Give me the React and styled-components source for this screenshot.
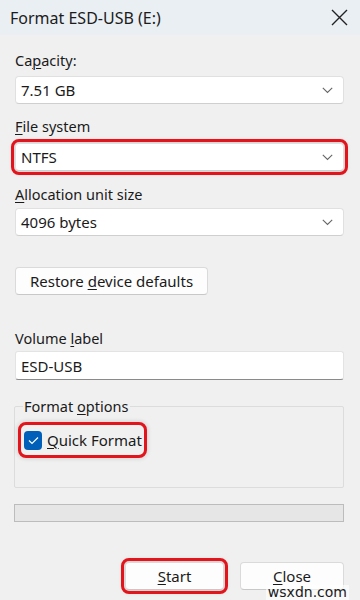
import React from "react";
import styled, { createGlobalStyle } from "styled-components";

const Global = createGlobalStyle`
  html, body { margin: 0; padding: 0; background: #f0f0f0; }
  body { font-family: "Noto Sans", "Open Sans", sans-serif; color: #1a1a1a; }
  * { box-sizing: border-box; }
`;

const Window = styled.div`
  position: relative;
  width: 360px;
  height: 600px;
  background: #f0f0f0;
  display: flex;
  flex-direction: column;
  overflow: hidden;
`;

const TitleBar = styled.div`
  height: 35px;
  background: #eaeff4;
  display: flex;
  align-items: center;
  justify-content: space-between;
  padding: 0 12px 0 10px;
  font-size: 16px;
  color: #1c1c1c;
`;

const Body = styled.div`
  display: flex;
  flex-direction: column;
  padding: 15px 16px 0 15px;
`;

const Label = styled.div`
  font-size: 14.5px;
  line-height: 20px;
  height: 20px;
  margin-top: ${(p) => p.$mt || 0}px;
  margin-bottom: ${(p) => p.$mb || 6}px;
  color: #1a1a1a;
`;

const Combo = styled.div`
  height: 28px;
  background: #fff;
  border: 1px solid #e0e0e0;
  border-bottom-color: #cfcfcf;
  border-radius: 4px;
  display: flex;
  align-items: center;
  justify-content: space-between;
  padding: 0 10px 0 5px;
  font-size: 15px;
  color: #1a1a1a;
  ${(p) =>
    p.$highlight &&
    `outline: 3px solid #e3141b; outline-offset: 1px; border-radius: 4px; box-shadow: 0 0 4px 3px rgba(0,0,0,0.12);`}
`;

const TextInput = styled.div`
  height: 29px;
  background: #fff;
  border: 1px solid #e3e3e3;
  border-bottom: 1px solid #8a8a8a;
  border-radius: 3px;
  display: flex;
  align-items: center;
  padding: 0 5px;
  font-size: 15px;
`;

const Button = styled.div`
  height: 28px;
  background: #fdfdfd;
  border: 1px solid #dadada;
  border-bottom-color: #c8c8c8;
  border-radius: 4px;
  display: flex;
  align-items: center;
  justify-content: center;
  font-size: 15px;
  color: #1a1a1a;
  width: ${(p) => p.$w}px;
  ${(p) =>
    p.$highlight &&
    `outline: 3px solid #e3141b; outline-offset: 1px; box-shadow: 0 0 4px 3px rgba(0,0,0,0.12);`}
`;

const GroupBox = styled.fieldset`
  margin: 17px 0 0 -1px;
  padding: 6px 0 0 6px;
  height: 91px;
  border: 1px solid #dcdcdc;
  border-radius: 2px;
  min-width: 0;
`;

const Legend = styled.legend`
  padding: 0 2px 0 1px;
  margin-left: 2px;
  font-size: 14.5px;
  line-height: 18px;
  color: #1a1a1a;
`;

const CheckRow = styled.div`
  display: inline-flex;
  align-items: center;
  gap: 5px;
  padding: 2px 2px 2px 3px;
  margin-top: 4px;
  border-radius: 5px;
  outline: 3px solid #e3141b;
  outline-offset: 0;
  box-shadow: 0 0 4px 4px rgba(0,0,0,0.12);
  font-size: 15px;
  color: #1a1a1a;
  height: 30px;
`;

const CheckBox = styled.span`
  width: 18px;
  height: 19px;
  background: #005fb8;
  border-radius: 4px;
  display: flex;
  align-items: center;
  justify-content: center;
`;

const Progress = styled.div`
  margin-top: 16px;
  margin-left: -1px;
  height: 18px;
  background: #e6e6e6;
  border: 1px solid #bcbcbc;
`;

const ButtonRow = styled.div`
  display: flex;
  justify-content: flex-end;
  gap: 16px;
  margin-top: 40px;
`;

const Key = styled.u`
  text-decoration-thickness: 1px;
  text-underline-offset: 2px;
`;

const Watermark = styled.div`
  position: absolute;
  right: 11px;
  bottom: 0px;
  font-family: "DejaVu Sans", sans-serif;
  font-size: 14px;
  line-height: 15px;
  color: #1a1a1a;
  background: rgba(255,255,255,0.6);
  padding: 0 2px;
`;

const Chevron = () => (
  <svg width="11" height="7" viewBox="0 0 11 7" fill="none">
    <path d="M0.8 0.8 L5.5 5.5 L10.2 0.8" stroke="#666" strokeWidth="1.1" />
  </svg>
);

const CloseIcon = () => (
  <svg width="17" height="17" viewBox="0 0 17 17" fill="none">
    <path d="M1 1 L16 16 M16 1 L1 16" stroke="#222" strokeWidth="1.4" />
  </svg>
);

const Check = () => (
  <svg width="11" height="9" viewBox="0 0 11 9" fill="none">
    <path d="M1 4.5 L4 7.5 L10 1.5" stroke="#fff" strokeWidth="1.2" />
  </svg>
);

export default function App() {
  return (
    <>
      <Global />
      <Window>
        <TitleBar>
          <span>Format ESD-USB (E:)</span>
          <CloseIcon />
        </TitleBar>
        <Body>
          <Label>
            Ca<Key>p</Key>acity:
          </Label>
          <Combo>
            <span>7.51 GB</span>
            <Chevron />
          </Combo>
          <Label $mt={12}>
            <Key>F</Key>ile system
          </Label>
          <Combo $highlight style={{ marginTop: 1 }}>
            <span>NTFS</span>
            <Chevron />
          </Combo>
          <Label $mt={13} $mb={4}>
            <Key>A</Key>llocation unit size
          </Label>
          <Combo>
            <span>4096 bytes</span>
            <Chevron />
          </Combo>
          <Button $w={193} style={{ marginTop: 31 }}>
            <span>
              Restore <Key>d</Key>evice defaults
            </span>
          </Button>
          <Label $mt={33} $mb={3}>
            Volume <Key>l</Key>abel
          </Label>
          <TextInput>ESD-USB</TextInput>
          <GroupBox>
            <Legend>
              Format <Key>o</Key>ptions
            </Legend>
            <CheckRow>
              <CheckBox>
                <Check />
              </CheckBox>
              <span>
                <Key>Q</Key>uick Format
              </span>
            </CheckRow>
          </GroupBox>
          <Progress />
          <ButtonRow>
            <Button $w={99} $highlight>
              <span>
                <Key>S</Key>tart
              </span>
            </Button>
            <Button $w={104}>
              <span>
                <Key>C</Key>lose
              </span>
            </Button>
          </ButtonRow>
        </Body>
        <Watermark>wsxdn.com</Watermark>
      </Window>
    </>
  );
}
